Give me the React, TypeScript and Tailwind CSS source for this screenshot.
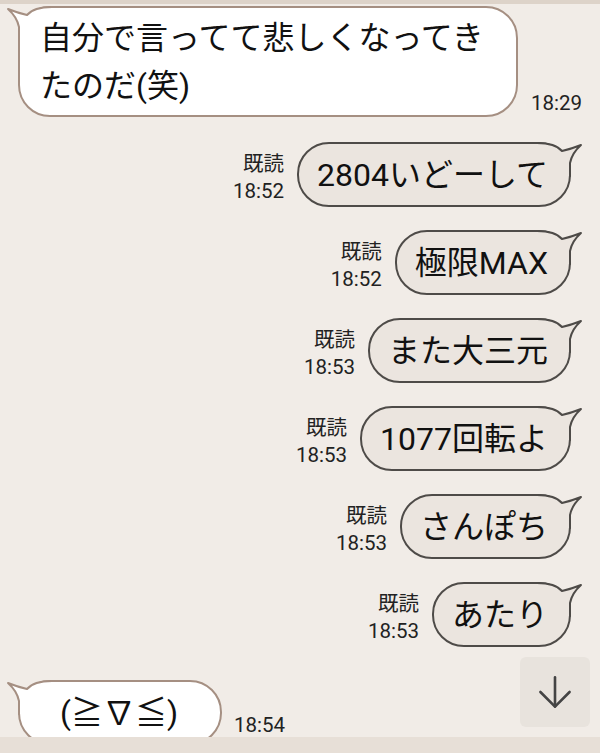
import { ArrowDown } from "lucide-react";

type Side = "left" | "right";

const sent = [
  { text: "2804いどーして", time: "18:52" },
  { text: "極限MAX", time: "18:52" },
  { text: "また大三元", time: "18:53" },
  { text: "1077回転よ", time: "18:53" },
  { text: "さんぽち", time: "18:53" },
  { text: "あたり", time: "18:53" },
];

// bubble tail drawn over the top corner of a rounded bubble
function Tail({ side, fill, stroke }: { side: Side; fill: string; stroke: string }) {
  const outline = "M0 1 C10 1 20 3 25 9 Q34 7 44 3 Q35 11 33 21 L33 34";
  return (
    <svg
      className={`absolute top-[-2px] ${side === "right" ? "right-[-16px]" : "left-[-16px]"}`}
      width={48}
      height={40}
      viewBox="0 0 48 40"
      fill="none"
    >
      <g transform={side === "left" ? "translate(48 0) scale(-1 1)" : undefined}>
        <path d={`${outline} L0 34 Z`} fill={fill} />
        <path d={outline} stroke={stroke} strokeWidth={2} strokeLinejoin="round" strokeLinecap="round" />
      </g>
    </svg>
  );
}

function SentRow({ text, time }: { text: string; time: string }) {
  return (
    <div className="flex items-end justify-end">
      <div className="mr-[13px] mb-[2px] text-right text-[20.5px] leading-[27px] text-[#222]">
        <div>既読</div>
        <div>{time}</div>
      </div>
      <div className="relative h-[65px] flex items-center rounded-[32px] border-2 border-[#4e4b48] bg-[#ebe5df] pl-[18px] pr-[21px]">
        <Tail side="right" fill="#ebe5df" stroke="#4e4b48" />
        <span className="relative text-[32px] leading-[48px] text-[#111] whitespace-nowrap">{text}</span>
      </div>
    </div>
  );
}

export default function App() {
  return (
    <div className="relative w-[600px] h-[753px] flex flex-col overflow-hidden bg-[#f1ece7] font-[Roboto,'Noto_Sans_CJK_JP',sans-serif]">
      <div className="h-[4px] bg-[#ddd3c9]" />

      <div className="flex-1 overflow-hidden flex flex-col pt-[2px]">
        {/* received */}
        <div className="flex items-end pl-[18px]">
          <div className="relative w-[500px] rounded-[32px] border-2 border-[#a58f82] bg-white pl-[20px] pr-[27px] pt-[6px] pb-[5px]">
            <Tail side="left" fill="#ffffff" stroke="#a58f82" />
            <span className="relative block text-[32px] leading-[48px] text-[#111]">
              自分で言ってて悲しくなってきたのだ(笑)
            </span>
          </div>
          <div className="ml-[13px] text-[20.5px] leading-[27px] text-[#222]">18:29</div>
        </div>

        {/* sent */}
        <div className="mt-[25px] flex flex-col gap-[23px] pr-[29px]">
          {sent.map((m, i) => (
            <SentRow key={i} text={m.text} time={m.time} />
          ))}
        </div>

        {/* received, partly hidden */}
        <div className="mt-[33px] flex items-end pl-[18px]">
          <div className="relative w-[204px] h-[65px] flex items-center justify-center rounded-[32px] border-2 border-[#a58f82] bg-white">
            <Tail side="left" fill="#ffffff" stroke="#a58f82" />
            <span className="relative text-[32px] leading-[48px] text-[#111] pr-[2px]">(≧∇≦)</span>
          </div>
          <div className="ml-[12px] mb-[10px] text-[20.5px] leading-[20px] text-[#222]">18:54</div>
        </div>
      </div>

      <div className="h-[16px] bg-[#e7dfd7]" />

      <button className="absolute left-[520px] top-[657px] w-[70px] h-[70px] flex items-center justify-center rounded-[6px] bg-[#e8e3dd] text-[#444]">
        <ArrowDown size={50} strokeWidth={1.25} />
      </button>
    </div>
  );
}
